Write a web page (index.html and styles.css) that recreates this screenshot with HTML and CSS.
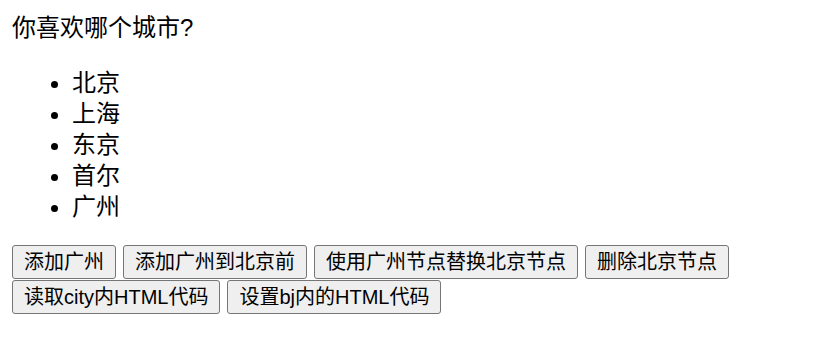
FILE: index.html
```html
<!DOCTYPE html>
<html lang="zh-CN">
<head>
<meta charset="utf-8">
<title>DOM</title>
<link rel="stylesheet" href="styles.css">
</head>
<body>
<div class="total">
  <div class="question">你喜欢哪个城市?</div>
  <ul class="city" id="city">
    <li id="bj">北京</li>
    <li>上海</li>
    <li>东京</li>
    <li>首尔</li>
    <li>广州</li>
  </ul>
</div>
<div class="btn-list">
  <div class="btn-row">
    <button class="btn">添加广州</button>
    <button class="btn">添加广州到北京前</button>
    <button class="btn">使用广州节点替换北京节点</button>
    <button class="btn">删除北京节点</button>
  </div>
  <div class="btn-row">
    <button class="btn">读取city内HTML代码</button>
    <button class="btn">设置bj内的HTML代码</button>
  </div>
</div>
</body>
</html>
```
FILE: styles.css
```css
html, body {
  background: #ffffff;
}
body {
  margin: 12px;
  font-family: "Liberation Sans", "Noto Sans CJK SC", sans-serif;
  font-size: 24px;
  line-height: 31px;
  color: #000000;
}
.question {
  margin: 0;
}
.city {
  margin: 24px 0 23px;
  padding-left: 60px;
  list-style: disc;
}
.city li {
  line-height: 31px;
}
.btn-list {
  display: flex;
  flex-direction: column;
  row-gap: 1px;
}
.btn-row {
  display: flex;
  column-gap: 7px;
}
.btn {
  font-family: "Liberation Sans", "Noto Sans CJK SC", sans-serif;
  font-size: 20px;
  line-height: 28px;
  height: 34px;
  padding: 1px 11px;
  margin: 0;
  color: #000000;
  background: #efefef;
  border: 1px solid #767676;
  border-radius: 3px;
}
```
